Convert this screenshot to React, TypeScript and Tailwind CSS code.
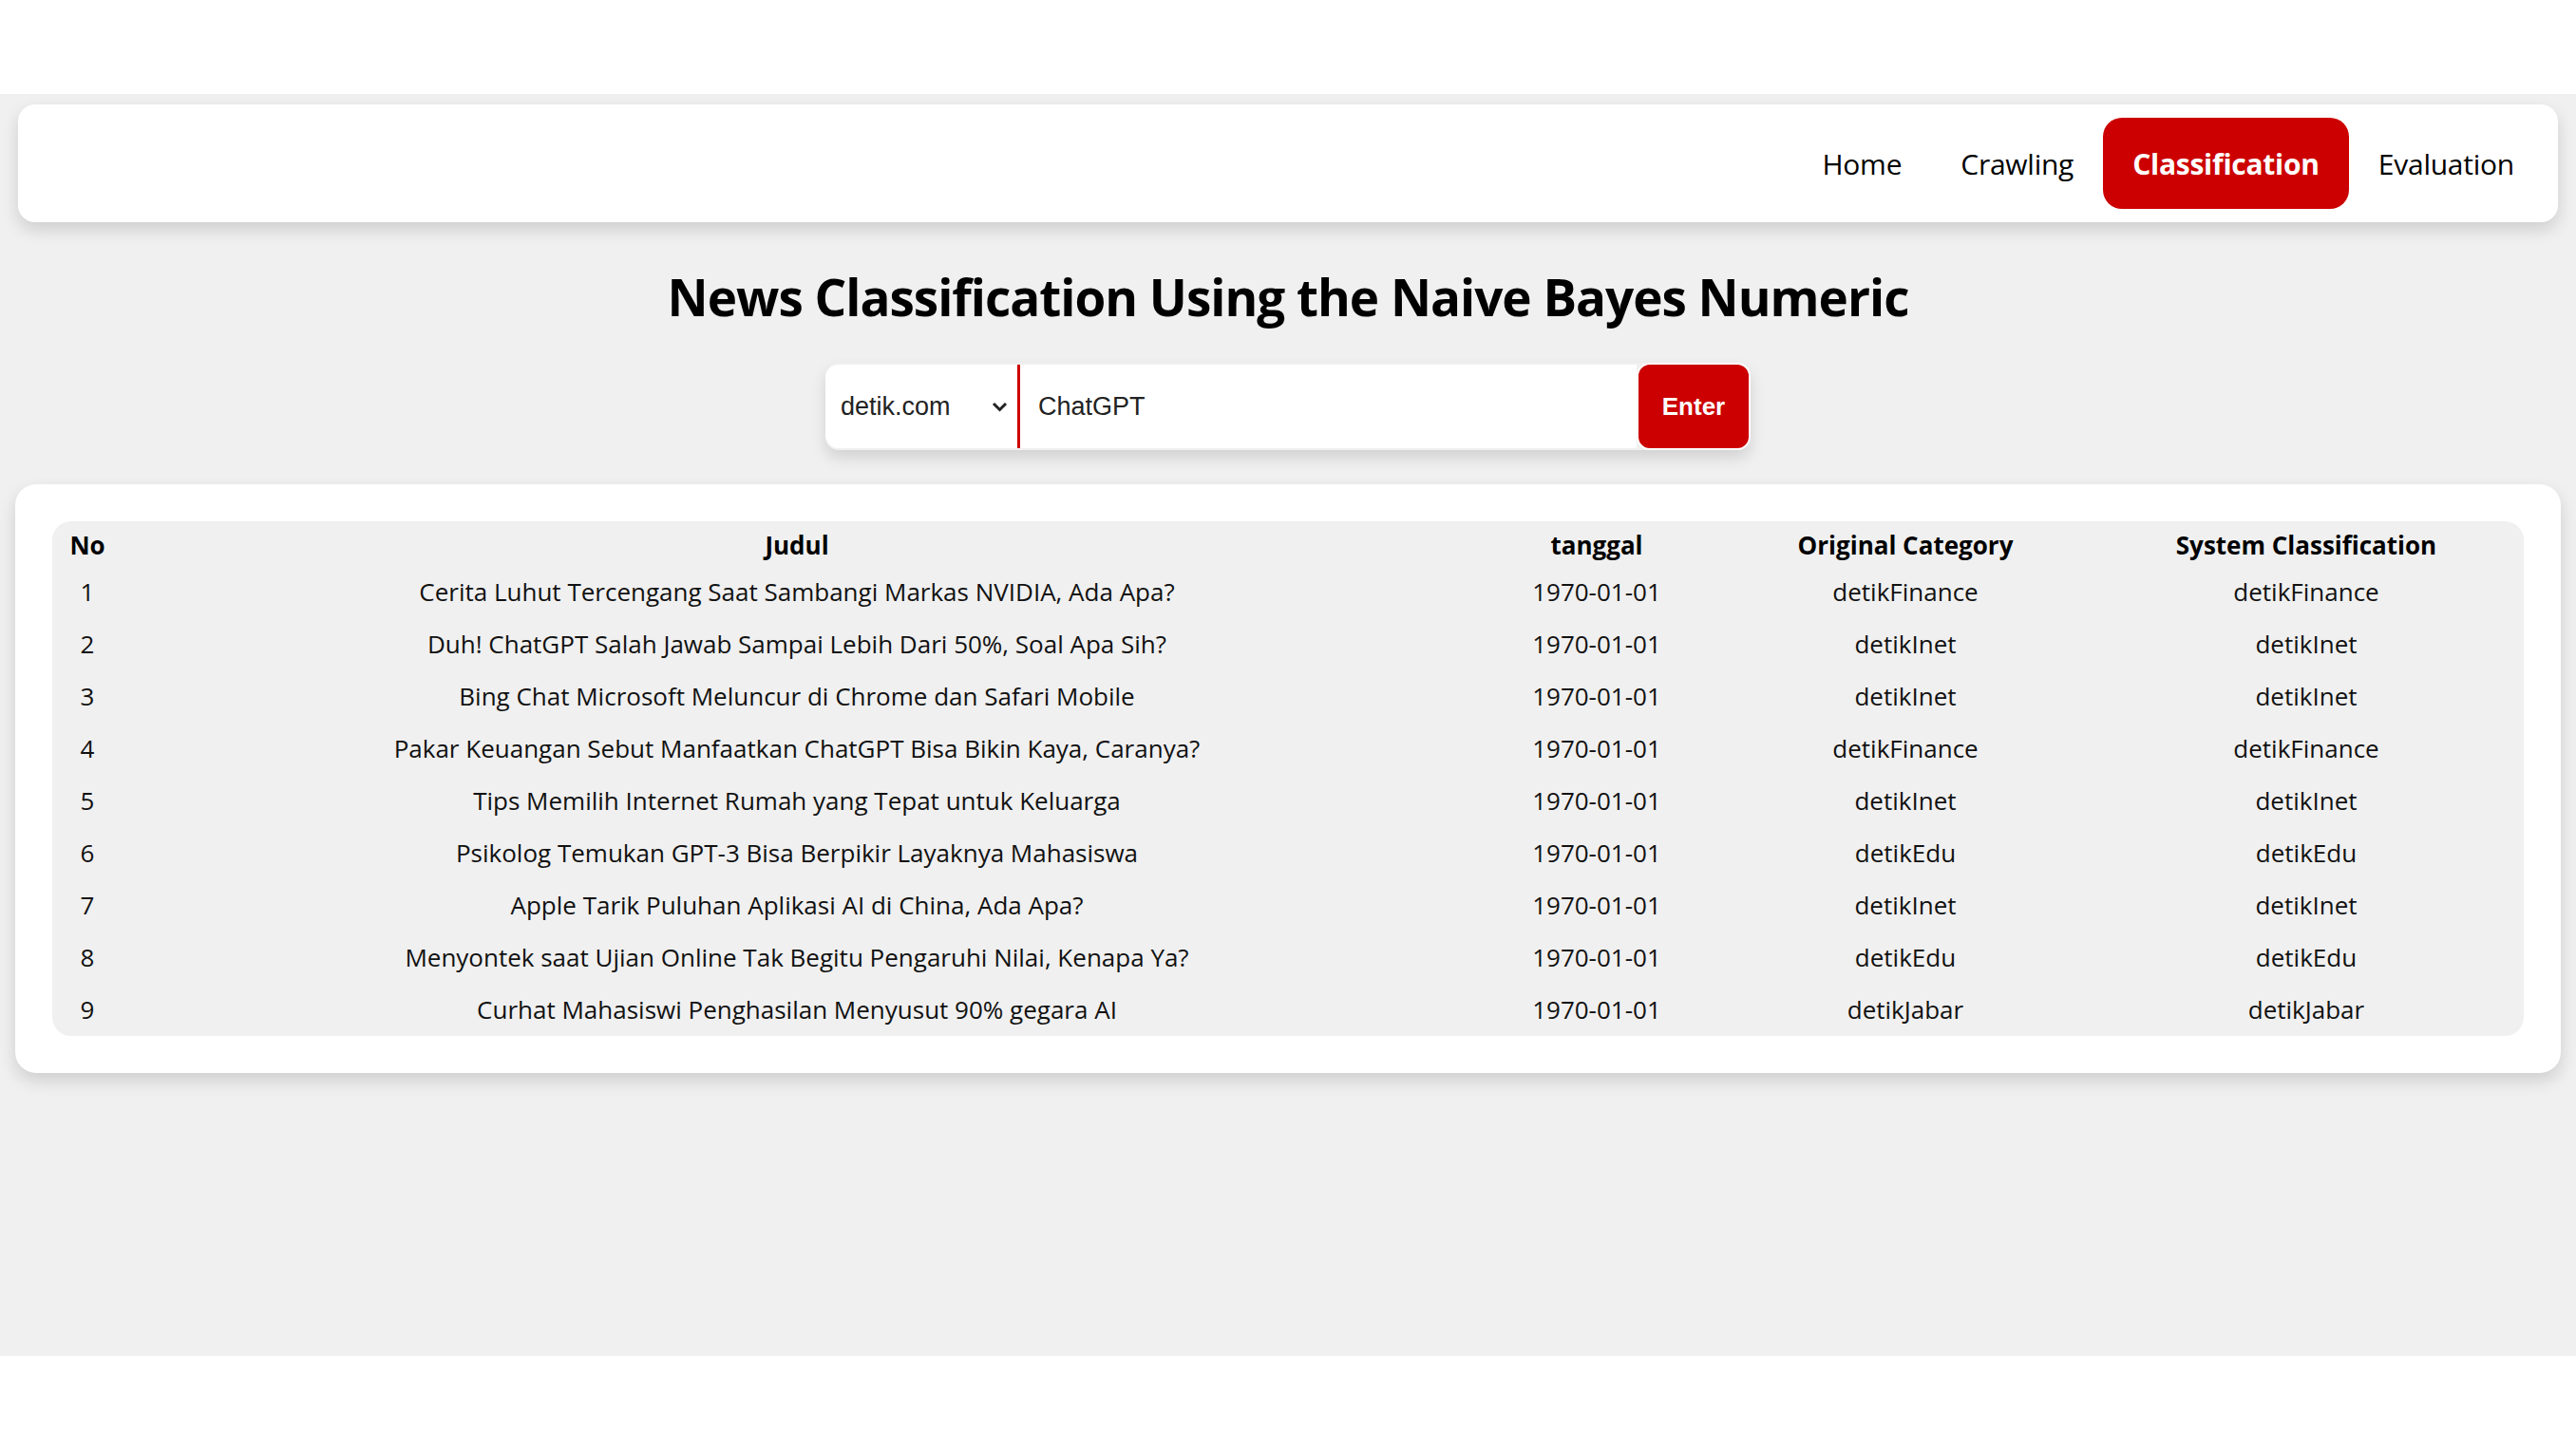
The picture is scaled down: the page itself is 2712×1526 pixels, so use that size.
const rows = [
  { no: 1, judul: "Cerita Luhut Tercengang Saat Sambangi Markas NVIDIA, Ada Apa?", original: "detikFinance", system: "detikFinance" },
  { no: 2, judul: "Duh! ChatGPT Salah Jawab Sampai Lebih Dari 50%, Soal Apa Sih?", original: "detikInet", system: "detikInet" },
  { no: 3, judul: "Bing Chat Microsoft Meluncur di Chrome dan Safari Mobile", original: "detikInet", system: "detikInet" },
  { no: 4, judul: "Pakar Keuangan Sebut Manfaatkan ChatGPT Bisa Bikin Kaya, Caranya?", original: "detikFinance", system: "detikFinance" },
  { no: 5, judul: "Tips Memilih Internet Rumah yang Tepat untuk Keluarga", original: "detikInet", system: "detikInet" },
  { no: 6, judul: "Psikolog Temukan GPT-3 Bisa Berpikir Layaknya Mahasiswa", original: "detikEdu", system: "detikEdu" },
  { no: 7, judul: "Apple Tarik Puluhan Aplikasi AI di China, Ada Apa?", original: "detikInet", system: "detikInet" },
  { no: 8, judul: "Menyontek saat Ujian Online Tak Begitu Pengaruhi Nilai, Kenapa Ya?", original: "detikEdu", system: "detikEdu" },
  { no: 9, judul: "Curhat Mahasiswi Penghasilan Menyusut 90% gegara AI", original: "detikJabar", system: "detikJabar" },
];

const links = ["Home", "Crawling", "Classification", "Evaluation"];

function Navbar() {
  return (
    <nav className="mx-[3px] flex h-[124px] items-center justify-end rounded-[18px] bg-white pr-[15px] shadow-[0_8px_18px_rgba(0,0,0,0.14)]">
      {links.map((link) => (
        <a
          key={link}
          href="#"
          className={
            link === "Classification"
              ? "flex h-[96px] items-center rounded-[20px] bg-[#cc0000] px-[31px] text-[30px] font-bold tracking-[-0.25px] text-white"
              : "flex h-[96px] items-center px-[31px] text-[30px] tracking-[-0.25px] text-black"
          }
        >
          {link}
        </a>
      ))}
    </nav>
  );
}

function SearchBar() {
  return (
    <div className="mt-[31px] flex justify-center">
      <div className="flex items-center rounded-[14px] shadow-[0_8px_16px_rgba(0,0,0,0.13)]">
        <div className="relative flex h-[88px] w-[202px] items-center rounded-l-[14px] bg-white">
          <select className="h-full w-full appearance-none bg-transparent pl-[16px] text-[27px] text-[#222] outline-none [font-family:'Liberation_Sans',Arial,sans-serif]">
            <option>detik.com</option>
          </select>
          {/* native-looking dropdown caret */}
          <svg className="pointer-events-none absolute right-[10px] h-[11px] w-[17px]" viewBox="0 0 17 11" fill="none">
            <path d="M2 2L8.5 8.5L15 2" stroke="#222" strokeWidth="3" />
          </svg>
        </div>
        <div className="h-[88px] w-[3px] bg-[#cc0000]" />
        <input
          defaultValue="ChatGPT"
          className="h-[88px] w-[649px] bg-white pl-[19px] text-[27px] text-[#222] outline-none [font-family:'Liberation_Sans',Arial,sans-serif]"
        />
        <button className="h-[92px] w-[120px] rounded-[14px] border-2 border-white bg-[#cc0000] text-[26px] font-bold text-white [font-family:'Liberation_Sans',Arial,sans-serif]">
          Enter
        </button>
      </div>
    </div>
  );
}

function ResultTable() {
  return (
    <div className="mt-[36px] rounded-[22px] bg-white p-[39px] shadow-[0_8px_18px_rgba(0,0,0,0.14)]">
      <div className="overflow-hidden rounded-[20px] bg-[#f0f0f0]">
        <table className="w-full table-fixed text-center text-[26px] text-[#111]">
          <colgroup>
            <col className="w-[74px]" />
            <col className="w-[1420px]" />
            <col className="w-[264px]" />
            <col className="w-[386px]" />
            <col />
          </colgroup>
          <thead>
            <tr className="h-[47px] font-bold text-black">
              <th className="pt-[4px]">No</th>
              <th className="pt-[4px]">Judul</th>
              <th className="pt-[4px]">tanggal</th>
              <th className="pt-[4px]">Original Category</th>
              <th className="pt-[4px]">System Classification</th>
            </tr>
          </thead>
          <tbody>
            {rows.map((row) => (
              <tr key={row.no} className="h-[55px]">
                <td>{row.no}</td>
                <td>{row.judul}</td>
                <td>1970-01-01</td>
                <td>{row.original}</td>
                <td>{row.system}</td>
              </tr>
            ))}
          </tbody>
        </table>
      </div>
    </div>
  );
}

export default function App() {
  return (
    <div className="min-h-screen bg-white [font-family:'Open_Sans','Noto_Sans',sans-serif]">
      <div className="h-[99px]" />
      <main className="h-[1329px] bg-[#f0f0f0] px-[16px] pt-[11px]">
        <Navbar />
        <h1 className="mt-[41px] text-center text-[53px] font-bold leading-[76px] tracking-[-1px] text-black">
          News Classification Using the Naive Bayes Numeric
        </h1>
        <SearchBar />
        <ResultTable />
      </main>
    </div>
  );
}
